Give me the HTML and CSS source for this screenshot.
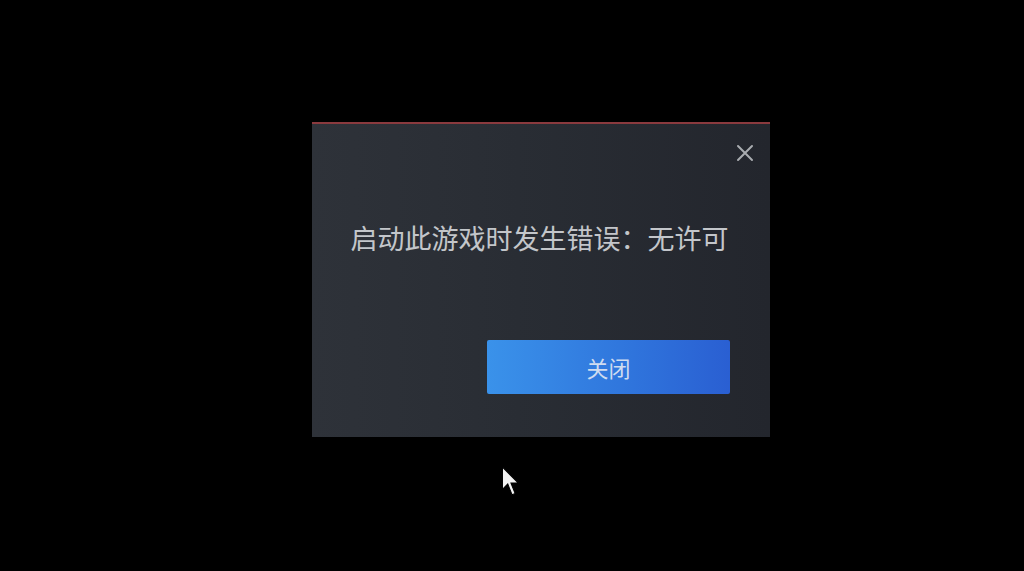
FILE: index.html
```html
<!DOCTYPE html>
<html lang="zh-CN">
<head>
    <meta charset="UTF-8">
    <meta name="viewport" content="width=device-width, initial-scale=1.0">
    <title>错误</title>
    <link rel="stylesheet" href="styles.css">
</head>
<body>
    <div class="screen">
        <div class="dialog">
            <div class="dialog-header">
                <button class="close-btn" aria-label="关闭">
                    <svg width="18" height="18" viewBox="0 0 18 18">
                        <path d="M2 2 L16 16 M16 2 L2 16" stroke="#a9acb0" stroke-width="2" stroke-linecap="round"/>
                    </svg>
                </button>
            </div>
            <div class="message">启动此游戏时发生错误：无许可</div>
            <div class="actions">
                <button class="primary-btn">关闭</button>
            </div>
        </div>
        <svg class="cursor" width="22" height="34" viewBox="0 0 20 32">
            <path d="M1 1 L1 22 L6 17 L10 27 L13 26 L9 16 L16 16 Z" fill="#f2f2f2" stroke="#000" stroke-width="1"/>
        </svg>
    </div>
</body>
</html>
```

FILE: styles.css
```css
body {
    margin: 0;
    background-color: #000;
    font-family: "Noto Sans CJK SC", "Noto Sans", sans-serif;
    height: 571px;
    overflow: hidden;
}
.screen {
    position: relative;
    padding: 122px 0 0 312px;
}
.dialog {
    width: 458px;
    height: 315px;
    box-sizing: border-box;
    border-top: 2px solid #8a3a3e;
    background: linear-gradient(90deg, #2e3239 0%, #292d34 45%, #23262d 100%);
    display: flex;
    flex-direction: column;
}
.dialog-header {
    display: flex;
    justify-content: flex-end;
    padding: 20px 16px 0 0;
    height: 38px;
}
.close-btn {
    background: none;
    border: none;
    padding: 0;
    width: 18px;
    height: 18px;
    cursor: pointer;
}
.message {
    margin-top: 39px;
    text-align: center;
    color: #c3c6ca;
    font-size: 27px;
    line-height: 34px;
    padding-right: 3px;
}
.actions {
    display: flex;
    justify-content: flex-end;
    padding: 85px 40px 0 0;
}
.primary-btn {
    width: 243px;
    height: 54px;
    border: none;
    border-radius: 2px;
    background: linear-gradient(90deg, #3a92ea 0%, #2f74dc 60%, #2a5fd2 100%);
    color: #cfdcf0;
    font-family: inherit;
    font-size: 22px;
    padding-right: 6px;
    cursor: pointer;
}
.cursor {
    position: absolute;
    left: 501px;
    top: 466px;
}
```
